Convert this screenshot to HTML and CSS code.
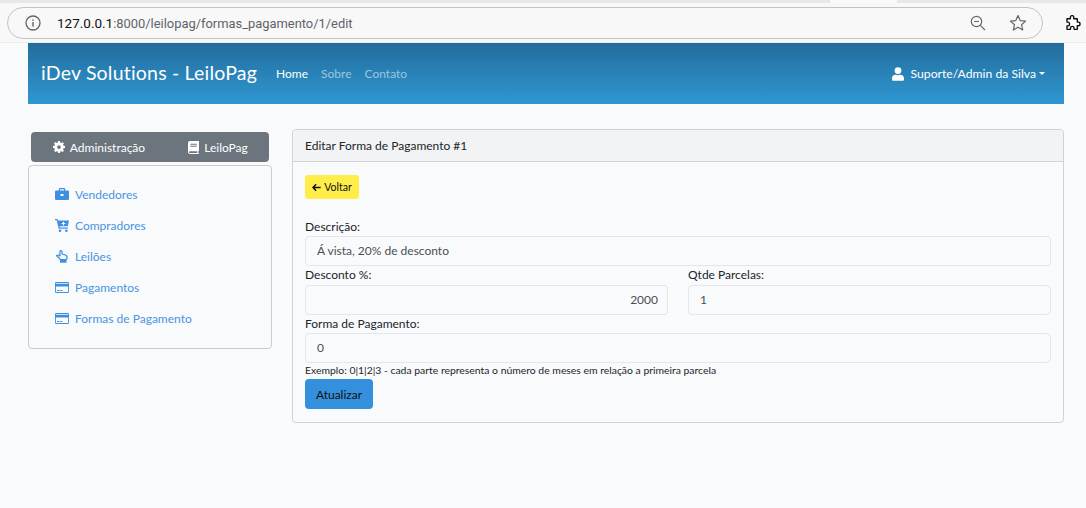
FILE: index.html
```html
<!DOCTYPE html>
<html lang="pt">
<head>
<meta charset="utf-8">
<title>LeiloPag</title>
<link rel="stylesheet" href="styles.css">
</head>
<body>
<header class="chrome">
  <div class="tabstrip"><div class="tabgap"></div></div>
  <div class="toolbar">
    <div class="omnibox">
      <svg class="info" viewBox="0 0 16 16" width="16" height="16"><circle cx="8" cy="8" r="7" fill="none" stroke="#666" stroke-width="1.3"/><rect x="7.3" y="7" width="1.4" height="4.6" fill="#666"/><rect x="7.3" y="4.4" width="1.4" height="1.5" fill="#666"/></svg>
      <span class="url"><b>127.0.0.1</b>:8000/leilopag/formas_pagamento/1/edit</span>
      <svg class="zoomout" viewBox="0 0 16 16" width="16" height="16"><circle cx="6.5" cy="6.5" r="5.2" fill="none" stroke="#666" stroke-width="1.2"/><path d="M4 6.5h5M10.3 10.3l4.7 4.7" stroke="#666" stroke-width="1.2" fill="none"/></svg>
      <svg class="star" viewBox="0 0 18 18" width="18" height="18"><path d="M9 1.6l2.2 5 5.4.5-4.1 3.6 1.2 5.300L9 13.200 4.300 16l1.200-5.300L1.400 7.100l5.400-.5z" fill="none" stroke="#666" stroke-width="1.200" stroke-linejoin="round"/></svg>
    </div>
    <svg class="puzzle" viewBox="0 0 16 16" width="17" height="17"><path d="M6 2.200a1.600 1.600 0 0 1 3.200 0V3.500h3.300v3.200h.9a1.700 1.700 0 0 1 0 3.400h-.9v3.400H9.500v-1.100a1.700 1.700 0 0 0-3.400 0v1.100H2.800v-3.300h.7a1.700 1.700 0 0 0 0-3.500h-.7V3.500H6z" fill="#fff" stroke="#111" stroke-width="1.300" stroke-linejoin="round"/></svg>
  </div>
</header>

<div class="page">
  <nav class="navbar">
    <a class="brand">iDev Solutions - LeiloPag</a>
    <ul class="navlinks">
      <li class="active">Home</li>
      <li>Sobre</li>
      <li>Contato</li>
    </ul>
    <div class="user">
      <svg viewBox="0 0 448 512" width="12" height="14"><path fill="#fff" d="M224 256a128 128 0 1 0 0-256 128 128 0 0 0 0 256zm90 32h-17a174 174 0 0 1-146 0h-17A134 134 0 0 0 0 422v42c0 26 22 48 48 48h352c26 0 48-22 48-48v-42c0-74-60-134-134-134z"/></svg>
      <span>Suporte/Admin da Silva</span>
      <i class="caret"></i>
    </div>
  </nav>

  <div class="content">
    <aside class="sidebar">
      <div class="tabs">
        <span class="tab tab-admin">
          <svg viewBox="0 0 16 16" width="12" height="12"><path fill="#fff" d="M6.700 0h2.600l.4 2.100 1.300.6 1.800-1.200 1.800 1.800-1.200 1.800.6 1.300 2 .4v2.600l-2 .4-.6 1.300 1.200 1.800-1.800 1.800-1.800-1.200-1.300.6-.4 2H6.700l-.4-2-1.300-.6-1.800 1.200-1.800-1.800 1.200-1.800-.6-1.300-2-.4V6.600l2-.4.6-1.300-1.200-1.800 1.800-1.800L5 2.700l1.300-.6zM8 5.500a2.500 2.500 0 1 0 0 5 2.500 2.500 0 0 0 0-5z" fill-rule="evenodd"/></svg>
          Administração
        </span>
        <span class="tab">
          <svg viewBox="0 0 12 14" width="11" height="13"><path fill="#fff" fill-rule="evenodd" d="M2 0h10v10.500l-.8.700v1.800l.8.500v.5H2a2 2 0 0 1-2-2V2a2 2 0 0 1 2-2zm.5 3v1h7V3zm0 2.200v1h7v-1zM2 11a1 1 0 0 0 0 2h8v-2z"/></svg>
          LeiloPag
        </span>
      </div>
      <ul class="menu">
        <li><svg viewBox="0 0 14 12" width="14" height="12"><path fill="#3f8fe0" fill-rule="evenodd" d="M5 0h4a1.200 1.200 0 0 1 1.200 1.200V2.500h2.500A1.300 1.300 0 0 1 14 3.800v6.900a1.300 1.300 0 0 1-1.300 1.300H1.300A1.300 1.300 0 0 1 0 10.700V3.800a1.300 1.300 0 0 1 1.300-1.300h2.500V1.200A1.200 1.200 0 0 1 5 0zm0 1.200v1.300h4V1.200zM5.500 6v2h3V6z"/></svg><a>Vendedores</a></li>
        <li><svg viewBox="0 0 14 13" width="14" height="13"><path fill="#3f8fe0" fill-rule="evenodd" d="M0 0h2.600l.4 1.500H14l-1.200 5.800H4.400l.3 1.300h8v1.200H3.700L1.700 1.200H0zM7.900 2.700v1.300H6.600v1.100h1.300v1.300H9V5.100h1.300V4H9V2.700z"/><circle cx="5" cy="11.700" r="1.300" fill="#3f8fe0"/><circle cx="11.400" cy="11.700" r="1.300" fill="#3f8fe0"/></svg><a>Compradores</a></li>
        <li><svg viewBox="0 0 14 14" width="14" height="14"><path fill="none" stroke="#3f8fe0" stroke-width="1.200" stroke-linejoin="round" d="M1.500 6.500l2-.5 1.500 1V2.500a1 1 0 0 1 1-1 1 1 0 0 1 1 1V5l3.500 1 1.500 1.500v2L11 10.500H5.500z"/><rect x="5" y="10.500" width="6.500" height="3.200" fill="#3f8fe0"/></svg><a>Leilões</a></li>
        <li><svg viewBox="0 0 14 11" width="14" height="11"><path fill="#3f8fe0" fill-rule="evenodd" d="M1.200 0h11.600A1.200 1.200 0 0 1 14 1.200v8.600a1.200 1.200 0 0 1-1.200 1.200H1.200A1.200 1.200 0 0 1 0 9.800V1.200A1.200 1.200 0 0 1 1.200 0zM.9 1v.8h12.200V1zm0 3.600v5.500h12.200V4.600zM2 8h2.500v1H2zm3.300 0h2v1h-2z"/></svg><a>Pagamentos</a></li>
        <li><svg viewBox="0 0 14 11" width="14" height="11"><path fill="#3f8fe0" fill-rule="evenodd" d="M1.200 0h11.600A1.200 1.200 0 0 1 14 1.200v8.600a1.200 1.200 0 0 1-1.200 1.200H1.200A1.200 1.200 0 0 1 0 9.800V1.200A1.200 1.200 0 0 1 1.200 0zM.9 1v.8h12.200V1zm0 3.600v5.500h12.200V4.600zM2 8h2.500v1H2zm3.300 0h2v1h-2z"/></svg><a>Formas de Pagamento</a></li>
      </ul>
    </aside>

    <main class="card">
      <div class="card-header">Editar Forma de Pagamento #1</div>
      <div class="card-body">
        <a class="btn-back"><svg viewBox="0 0 12 10" width="9" height="9"><path d="M5.500.7L1.300 5l4.200 4.300M1.500 5H11.500" fill="none" stroke="#111" stroke-width="2"/></svg> Voltar</a>
        <form class="form">
          <label class="field">Descrição:
            <span class="control">Á vista, 20% de desconto</span>
          </label>
          <div class="row">
            <label class="field">Desconto %:
              <span class="control right">2000</span>
            </label>
            <label class="field">Qtde Parcelas:
              <span class="control">1</span>
            </label>
          </div>
          <label class="field">Forma de Pagamento:
            <span class="control">0</span>
          </label>
          <small class="hint">Exemplo: 0|1|2|3 - cada parte representa o número de meses em relação a primeira parcela</small>
          <a class="btn-submit">Atualizar</a>
        </form>
      </div>
    </main>
  </div>
</div>
</body>
</html>
```
FILE: styles.css
```css
* { box-sizing: border-box; }
html, body { margin: 0; height: 100%; }
body {
  background: #f8fafc;
  font-family: "Lato", "Noto Sans", sans-serif;
  font-size: 12px;
  color: #212529;
  overflow: hidden;
}
ul { list-style: none; margin: 0; padding: 0; }

.chrome { height: 43px; background: #f8f8f8; border-bottom: 1px solid #ececec; }
.tabstrip { height: 3px; background: #e8e8e8; }
.tabgap { width: 67px; height: 3px; margin-left: 830px; background: #fafafa; }
.toolbar { display: flex; align-items: center; height: 39px; padding: 1px 5px 0 7px; }
.omnibox {
  flex: 1;
  height: 32px;
  display: flex;
  align-items: center;
  padding: 0 15px 0 17px;
  background: #f8f8f8;
  border: 1px solid #c4c4c4;
  border-radius: 16px;
}
.url { margin-left: 16px; flex: 1; font-family: "Roboto", sans-serif; font-size: 12.900px; color: #5f6368; }
.url b { font-size: 13.500px; font-weight: 400; color: #111; }
.zoomout { margin-right: 23px; }
.puzzle { margin-left: 21px; }

.page { padding: 0 22px 0 28px; }
.navbar {
  height: 61px;
  display: flex;
  align-items: center;
  padding: 0 19px 0 13px;
  background: linear-gradient(#236d9b, #2f97d3);
  color: #fff;
}
.brand { font-size: 19.500px; margin-right: 19px; letter-spacing: .2px; padding-bottom: 2px; }
.navlinks { display: flex; gap: 13px; }
.navlinks li { color: rgba(255,255,255,.55); }
.navlinks .active { color: #fff; }
.user { margin-left: auto; display: flex; align-items: center; gap: 7px; font-size: 12.200px; }
.caret { margin-left: -4px; border: 3.500px solid transparent; border-top-color: #fff; border-bottom: 0; }

.content { display: flex; gap: 20px; align-items: flex-start; padding-top: 25px; }
.sidebar { width: 244px; padding-top: 3px; flex: none; }
.tabs {
  margin: 0 3px;
  height: 30px;
  display: flex;
  align-items: center;
  background: #6c757d;
  border-radius: 4px;
  color: #fff;
}
.tab { flex: 1; display: flex; align-items: center; justify-content: center; gap: 5px; }
.tab-admin { flex: none; width: 136px; }
.menu {
  margin-top: 3px;
  height: 184px;
  padding: 12.500px 0 0 26px;
  background: #f8fafc;
  border: 1px solid #ccc;
  border-radius: 4px;
}
.menu li { height: 31.200px; display: flex; align-items: center; gap: 6px; color: #4a94e0; }
.menu svg { width: 14px; flex: none; }

.card { flex: 1; height: 294px; border: 1px solid #d0d2d4; border-radius: 4px; }
.card-header {
  height: 32px;
  padding: 0 12px;
  display: flex;
  align-items: center;
  background: #f2f3f5;
  border-bottom: 1px solid #d0d2d4;
  border-radius: 4px 4px 0 0;
}
.card-body { padding: 13px 12px 0; }
.btn-back {
  width: 54px;
  height: 24px;
  display: flex;
  align-items: center;
  justify-content: center;
  gap: 3px;
  background: #ffed4a;
  border-radius: 3px;
  font-size: 10.500px;
  color: #111;
}
.form { margin-top: 19px; display: flex; flex-direction: column; }
.field { display: block; line-height: 18.400px; flex: 1; }
.control {
  display: flex;
  align-items: center;
  height: 30px;
  padding: 0 9px 0 11px;
  border: 1px solid #e3e6ea;
  border-radius: 4px;
  background: #f8fafc;
  color: #495057;
}
.right { justify-content: flex-end; }
.row { display: grid; grid-template-columns: 363px 363px; gap: 20px; }
.hint { font-size: 10.400px; line-height: 15.800px; }
.btn-submit {
  width: 68px;
  height: 30px;
  display: flex;
  align-items: center;
  justify-content: center;
  background: #3490dc;
  border-radius: 4px;
  color: #111;
}
```
